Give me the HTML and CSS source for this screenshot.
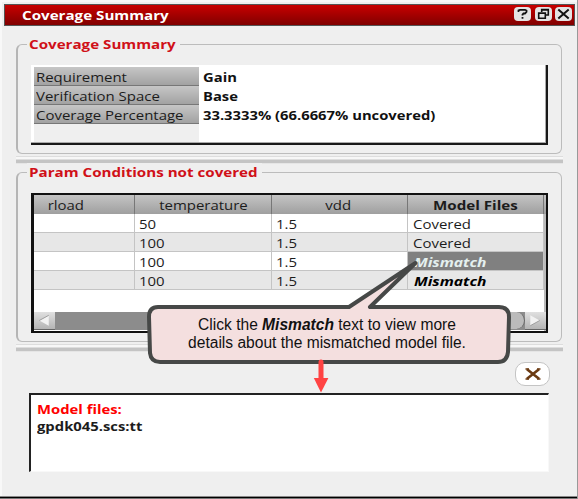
FILE: index.html
```html
<!DOCTYPE html>
<html lang="en">
<head>
<meta charset="utf-8">
<title>Coverage Summary</title>
<link rel="stylesheet" href="styles.css">
</head>
<body>
<div class="window">
  <header class="titlebar">
    <span class="wide bold">Coverage Summary</span>
    <div class="controls">
      <svg width="17" height="14" viewBox="0 0 17 14"><rect width="17" height="14" rx="4" fill="#e4e4e4"/><path d="M4.500 5V3.300L6 2.800H11L12.500 3.500V5L11 6.500H9.500L8.500 7.500V8.500M8.500 10V11.800" fill="none" stroke="#111" stroke-width="1.800"/></svg>
      <svg width="17" height="14" viewBox="0 0 17 14"><rect width="17" height="14" rx="4" fill="#e4e4e4"/><path d="M6.700 5V2.500H13.300V8H11M6 3H14M3.700 6H10.300V11.300H3.700ZM3 6.300H11" fill="none" stroke="#111" stroke-width="1.600"/></svg>
      <svg width="17" height="14" viewBox="0 0 17 14"><rect width="17" height="14" rx="4" fill="#e4e4e4"/><path d="M3.300 2.500L13.700 11.500M13.700 2.500L3.300 11.500" stroke="#111" stroke-width="2"/></svg>
    </div>
  </header>

  <section class="group summary">
    <h2><span class="wide bold">Coverage Summary</span></h2>
    <div class="summary-box">
      <div class="labels">
        <div><span class="wide">Requirement</span></div>
        <div><span class="wide">Verification Space</span></div>
        <div><span class="wide">Coverage Percentage</span></div>
      </div>
      <div class="values">
        <div><span class="wide bold">Gain</span></div>
        <div><span class="wide bold">Base</span></div>
        <div><span class="wide bold">33.3333% (66.6667% uncovered)</span></div>
      </div>
    </div>
  </section>

  <div class="splitter"></div>

  <section class="group params">
    <h2><span class="wide bold">Param Conditions not covered</span></h2>
    <div class="table-box">
      <div class="row head">
        <div><span class="wide">rload</span></div><div><span class="wide">temperature</span></div><div><span class="wide">vdd</span></div><div><span class="wide bold">Model Files</span></div>
      </div>
      <div class="row"><div></div><div><span class="wide">50</span></div><div><span class="wide">1.5</span></div><div><span class="wide">Covered</span></div></div>
      <div class="row alt"><div></div><div><span class="wide">100</span></div><div><span class="wide">1.5</span></div><div><span class="wide">Covered</span></div></div>
      <div class="row"><div></div><div><span class="wide">100</span></div><div><span class="wide">1.5</span></div><div class="selected"><span class="wide bold italic">Mismatch</span></div></div>
      <div class="row alt"><div></div><div><span class="wide">100</span></div><div><span class="wide">1.5</span></div><div><span class="wide bold italic">Mismatch</span></div></div>
      <div class="scrollbar">
        <svg class="step" width="21" height="18" viewBox="0 0 21 18"><path d="M15 3.500L5 9l10 5.500z" fill="#f2f2f2"/><path d="M15 3.500L5 9" stroke="#999" fill="none"/></svg>
        <div class="track"><div class="thumb"></div></div>
        <svg class="step" width="21" height="18" viewBox="0 0 21 18"><path d="M5 3.500L15 9 5 14.500z" fill="#f2f2f2"/><path d="M5 14.500L15 9" stroke="#999" fill="none"/></svg>
      </div>
    </div>
  </section>

  <div class="splitter"></div>

  <div class="close-row">
    <button class="close" aria-label="Close"><svg width="18" height="14" viewBox="0 0 18 14"><path d="M3 2.300L15 11.700M15 2.300L3 11.700" stroke="#6b3a12" stroke-width="2.700"/><path d="M1.500 2H5M13 2H16.500M1.500 12H5M13 12H16.500" stroke="#6b3a12" stroke-width="1.600"/></svg></button>
  </div>

  <div class="details">
    <div class="red"><span class="wide bold">Model files:</span></div>
    <div><span class="wide bold">gpdk045.scs:tt</span></div>
  </div>

  <div class="callout">
    <svg width="364" height="136" viewBox="0 0 364 136">
      <path d="M11 47H202L268.500 3 223 47H352Q362 47 362 57L361 92Q360 102 351 102H13Q4 102 3 93L2 57Q2 47 11 47Z" fill="#f4dfdf" stroke="#464847" stroke-width="4" stroke-linejoin="round"/>
      <path d="M174 102V120" stroke="#ff4343" stroke-width="5" stroke-linecap="round"/><path d="M166.800 118h14.600L174 132.500z" fill="#ff4343"/>
    </svg>
    <p>Click the <b>Mismatch</b> text to view more<br>details about the mismatched model file.</p>
  </div>
</div>
</body>
</html>
```
FILE: styles.css
```css
* { box-sizing: border-box; }
body {
  margin: 0;
  font: 13px/19px "Open Sans", "Noto Sans", sans-serif;
  color: #1c1c1c;
}
.window {
  position: relative;
  width: 578px;
  height: 499px;
  padding: 4px 2px 0 4px;
  overflow: hidden;
  background: #efefef;
  box-shadow: inset -1px 0 #999, inset 0 -1px #777, inset 0 -2px #000, inset 0 -3px #888, inset 2px 2px #f8f8f8;
}
.wide {
  display: inline-block;
  white-space: nowrap;
  transform: scaleX(1.15);
  transform-origin: 0 50%;
}
.bold { font-weight: 700; transform: scaleX(1.165); }
.italic { font-style: italic; transform: translateX(1px) scaleX(1.2); color: #000; }
.titlebar {
  display: flex;
  align-items: center;
  justify-content: space-between;
  width: 571px;
  height: 22px;
  padding: 0 2px 0 17px;
  border: 1px solid #555;
  background: linear-gradient(#c80000, #800000);
  color: #fff;
}
.controls { display: flex; gap: 3.5px; padding-bottom: 3px; }
.controls svg { display: block; }
.group {
  width: 546px;
  margin-left: 12px;
  padding: 0 13px;
  border: 1px solid #bcbcbc;
  border-left: 2px solid #b5b5b5;
  border-radius: 6px;
}
.group h2 {
  width: 153px;
  height: 19px;
  margin: -10px 0 0 -4px;
  padding-left: 2px;
  font-size: 13px;
  line-height: 19px;
  background: #efefef;
  color: #d01018;
}
.summary { height: 110px; margin-top: 18px; }
.summary-box {
  display: grid;
  grid-template-columns: 165px 1fr;
  width: 517px;
  height: 80px;
  margin-top: 11px;
  padding: 2px 1px 0 3px;
  line-height: 21px;
  background: #fff;
  border: solid #181818;
  border-width: 0 2px 2px 0;
  box-shadow: inset -1px -1px #aaa;
}
.labels { background: #efefef; margin-bottom: 1px; }
.labels div {
  height: 19px;
  padding-left: 2px;
  background: linear-gradient(#c6c6c6, #a2a2a2);
  border-bottom: 1px solid #777;
}
.values { padding-left: 4px; color: #111; }
.values div { height: 19px; }
.values .wide { transform: scaleX(1.137); }
.splitter {
  height: 8px;
  width: 547px;
  margin: 2px 0 0 12px;
  border-top: 1px solid #ddd;
  background: linear-gradient(#f7f7f7 2px, #ddd 2px 3px, #c4c4c4 3px 6px, #e5e5e5 6px);
}
.params { height: 170px; margin-top: 8px; }
.params h2 { width: 235px; }
.table-box {
  width: 517px;
  height: 140px;
  margin-top: 11px;
  background: #fff;
  border: solid #111;
  border-width: 2px 2px 2px 3px;
  box-shadow: inset -2px 0 #bbb;
}
.row {
  display: grid;
  grid-template-columns: 101px 137px 136px 136px;
  width: 510px;
  height: 19px;
  line-height: 21px;
}
.row > div {
  height: 19px;
  padding-left: 4px;
  border: solid #c4c4c4;
  border-width: 0 1px 1px 0;
}
.row > div:last-child { padding-left: 5px; }
.alt { background: #e7e7e7; }
.head { background: linear-gradient(#c4c4c4, #9f9f9f); width: 512px; }
.row.head > div { border: 0; border-right: 1px solid #777; text-align: center; padding: 0; }
.head .wide { transform-origin: 50% 50%; }
.row.head div:first-child { padding-right: 36px; }
.row.head div:nth-child(3) { padding-right: 3px; }
.row .selected { background: #808080; }
.selected .wide { color: #e4f0ef; }
.scrollbar { display: flex; height: 18px; margin-top: 22px; }
.step { background: linear-gradient(#e0e0e0, #b4b4b4); border-bottom: 1px solid #666; }
.track { flex: 1; background: #8c8c8c; }
.thumb { width: 100px; height: 17px; margin-left: auto; border-radius: 0 10px 10px 0; background: #bbb; border-right: 1px solid #666; }
.close-row { display: flex; justify-content: flex-end; padding-right: 26px; margin-top: 10px; }
.close {
  display: grid;
  place-items: center;
  width: 35px;
  height: 24px;
  padding: 0;
  border: 1px solid #c4c4c4;
  border-radius: 10px;
  background: #fff;
}
.details {
  width: 520px;
  height: 79px;
  margin: 7px 0 0 25px;
  padding: 6px 0 0 6px;
  line-height: 17px;
  background: #fff;
  border: 2px solid #222;
  border-right: 1px solid #f8f8f8;
  border-bottom: 1px solid #f8f8f8;
}
.red { color: #f00; }
.details .wide { transform: scaleX(1.14); }
.callout { position: absolute; left: 147px; top: 260px; width: 364px; }
.callout svg { display: block; }
.callout p {
  position: absolute;
  inset: 56px 0 auto -4px;
  margin: 0;
  font: 16px/18px "Liberation Sans", Arial, sans-serif;
  text-align: center;
  white-space: nowrap;
  color: #111;
  transform: scaleX(.973);
}
.callout b { font-style: italic; }
```
